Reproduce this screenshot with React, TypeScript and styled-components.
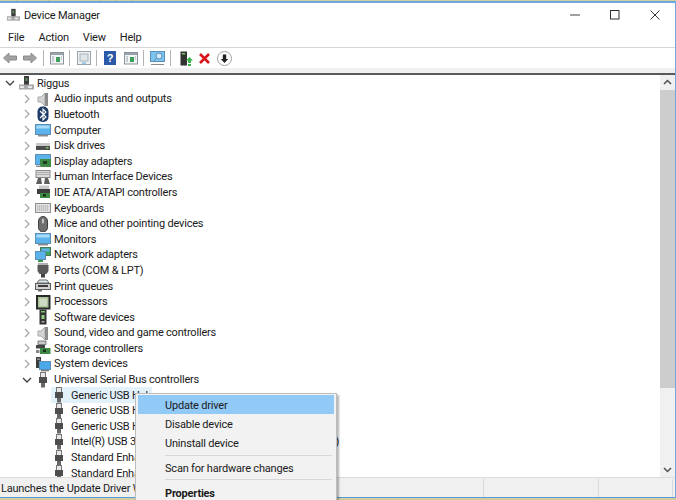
import React from "react";
import styled, { createGlobalStyle } from "styled-components";

const Global = createGlobalStyle`
  html, body { margin: 0; padding: 0; background: #fff; }
  #root { width: 676px; height: 500px; overflow: hidden; }
`;

const Page = styled.div`
  position: relative;
  width: 676px;
  height: 500px;
  overflow: hidden;
  display: flex;
  flex-direction: column;
  font-family: "Roboto", "Open Sans", sans-serif;
  font-size: 11px;
  letter-spacing: -0.2px;
  color: #1a1a1a;
  background: #d2cf9e;
`;
const TopStrip = styled.svg`
  display: block;
  width: 676px;
  height: 1px;
  flex: none;
`;
const Win = styled.div`
  flex: none;
  height: 497px;
  box-sizing: border-box;
  border-top: 2px solid #6ea8dc;
  border-right: 1px solid #6ea8dc;
  border-bottom: 1px solid #5a9bd5;
  background: #fff;
  display: flex;
  flex-direction: column;
`;
const TitleBar = styled.div`
  flex: none;
  height: 23px;
  display: flex;
  align-items: center;
  padding: 0 0 0 6px;
  gap: 4px;
`;
const TitleText = styled.span`
  flex: 1;
  padding-top: 1px;
`;
const WinControls = styled.div`
  display: flex;
  align-items: center;
  gap: 30px;
  padding-right: 15px;
`;
const MenuBar = styled.div`
  flex: none;
  display: flex;
  align-items: center;
  padding: 1px 0 0 8px;
  height: 20px;
  gap: 14px;
  border-bottom: 1px solid #d6d6d6;
`;
const MenuLabel = styled.span``;
const Toolbar = styled.div`
  flex: none;
  height: 20px;
  display: flex;
  align-items: center;
  padding-left: 3px;
`;
const ToolIcon = styled.span<{ $gap?: number }>`
  display: flex;
  margin-right: ${(p) => p.$gap ?? 5}px;
`;
const ToolSep = styled.span<{ $gap?: number }>`
  width: 1px;
  height: 16px;
  background: #b4b4b4;
  margin-right: ${(p) => p.$gap ?? 6}px;
`;
const ToolFoot = styled.div`
  flex: none;
  height: 7px;
  box-sizing: border-box;
  background: #f0f0f0;
  border-bottom: 2px solid #5a5a5a;
`;
const Content = styled.div`
  flex: none;
  height: 402px;
  display: flex;
`;
const Tree = styled.div`
  flex: 1;
  min-width: 0;
  overflow: hidden;
  padding-top: 0.5px;
`;
const Row = styled.div<{ $level: number }>`
  height: 15.6px;
  display: flex;
  align-items: center;
  white-space: nowrap;
  padding-left: ${(p) => [5, 22, 51][p.$level]}px;
`;
const Chevron = styled.span`
  width: 10px;
  margin-right: 3px;
  display: flex;
  justify-content: center;
`;
const RowIcon = styled.span<{ $deep?: boolean }>`
  display: flex;
  margin-right: ${(p) => (p.$deep ? 4 : 3)}px;
`;
const RowText = styled.span`
  display: flex;
  align-items: center;
  height: 15.6px;
`;
const SelectedWrap = styled.div`
  display: flex;
  align-items: center;
  width: 101px;
  height: 15.6px;
  background: #e3f1fb;
`;
const Scrollbar = styled.div`
  flex: none;
  width: 15px;
  background: #f0f0f0;
  display: flex;
  flex-direction: column;
  align-items: center;
`;
const ScrollBtn = styled.div`
  flex: none;
  height: 15px;
  display: flex;
  align-items: center;
  justify-content: center;
`;
const ScrollThumb = styled.div`
  flex: none;
  width: 15px;
  height: 298px;
  background: #cdcdcd;
`;
const ScrollGap = styled.div`
  flex: 1;
`;
const StatusBar = styled.div`
  flex: none;
  height: 20px;
  box-sizing: border-box;
  display: flex;
  background: #f0f0f0;
  border-top: 1px solid #dcdcdc;
  padding-top: 1px;
`;
const StatusCell = styled.div<{ $w: number }>`
  flex: none;
  width: ${(p) => p.$w}px;
  box-sizing: border-box;
  border-right: 1px solid #d9d9e0;
  display: flex;
  align-items: center;
  padding: 1px 0 0 1px;
  white-space: nowrap;
  overflow: hidden;
`;
const ContextMenu = styled.div`
  position: absolute;
  left: 135px;
  top: 393px;
  width: 202px;
  height: 112px;
  box-sizing: border-box;
  background: #f2f2f2;
  border: 1px solid #bdbdbd;
  padding: 1px 2px;
  box-shadow: 2px 2px 2px rgba(0, 0, 0, 0.3);
`;
const MenuEntry = styled.div<{ $active?: boolean; $bold?: boolean }>`
  height: 19px;
  box-sizing: border-box;
  padding: 1px 0 0 27px;
  display: flex;
  align-items: center;
  white-space: nowrap;
  background: ${(p) => (p.$active ? "#91c9f7" : "transparent")};
  font-weight: ${(p) => (p.$bold ? 700 : 400)};
`;
const MenuDivider = styled.div<{ $top: number; $bottom: number }>`
  height: 1px;
  background: #d7d7d7;
  margin: ${(p) => p.$top}px 2px ${(p) => p.$bottom}px 27px;
`;

const ChevronRight = () => (
  <svg width="8" height="10" viewBox="0 0 8 10"><path d="M2 1l4 4-4 4" fill="none" stroke="#a6a6a6" strokeWidth="1.2" /></svg>
);
const ChevronDown = () => (
  <svg width="10" height="8" viewBox="0 0 10 8"><path d="M1 2l4 4 4-4" fill="none" stroke="#404040" strokeWidth="1.3" /></svg>
);

type Kind = "pc" | "speaker" | "bt" | "monitor" | "disk" | "display" | "hid" | "ide" | "kbd" | "mouse" | "net" | "port" | "print" | "cpu" | "soft" | "storage" | "system" | "usb";

const glyphs: Record<Kind, React.ReactNode> = {
  pc: (
    <>
      <rect x="6" y="1" width="5" height="9" fill="#3d3d3d" />
      <rect x="7.5" y="3" width="2" height="3" fill="#5a8f5a" />
      <rect x="1" y="9.5" width="15" height="5" fill="#a8a8a8" />
      <rect x="2" y="11" width="4" height="2" fill="#e8e8e8" />
      <rect x="10" y="11" width="4" height="2" fill="#e8e8e8" />
    </>
  ),
  speaker: (
    <>
      <path d="M3 6h3l4-4v13l-4-4H3z" fill="#d4d4d4" stroke="#aaa" />
      <rect x="10" y="2" width="3" height="13" fill="#8c8c8c" />
    </>
  ),
  bt: (
    <>
      <rect x="2.5" y="0.5" width="11" height="15.5" rx="5" fill="#1c3b66" />
      <path d="M5 5l6 6-3 3V3l3 3-6 6" fill="none" stroke="#fff" strokeWidth="1.1" />
    </>
  ),
  monitor: (
    <>
      <rect x="0.5" y="2.5" width="15" height="10" fill="#5cb3ec" stroke="#5c8fb4" />
      <rect x="1.5" y="3.5" width="13" height="3" fill="#a8dcf8" />
      <rect x="3" y="13" width="10" height="1.5" fill="#8d8d8d" />
    </>
  ),
  disk: (
    <>
      <rect x="1" y="5" width="14" height="3" fill="#c9c9c9" />
      <rect x="1" y="8" width="14" height="4" fill="#4d4d4d" />
      <rect x="11" y="9" width="2.5" height="1.5" fill="#7bc66b" />
    </>
  ),
  display: (
    <>
      <rect x="0.5" y="1.5" width="15" height="10" fill="#5cb3ec" stroke="#5c8fb4" />
      <rect x="5" y="6" width="11" height="8" fill="#3e8a45" />
      <rect x="8" y="8" width="4" height="3" fill="#1f3d22" />
      <rect x="1" y="12.5" width="5" height="1.5" fill="#8d8d8d" />
    </>
  ),
  hid: (
    <>
      <rect x="1" y="1.5" width="14" height="7" fill="#dcdcdc" stroke="#888" />
      <path d="M2.5 3.5h11M2.5 5.5h11" stroke="#888" strokeDasharray="1.2 0.8" />
      <path d="M1 15l2-6h3l1 6zM9 15l1-6h3l2 6z" fill="#5f5f5f" />
    </>
  ),
  ide: (
    <>
      <rect x="4" y="1.5" width="10" height="4" fill="#c9c9c9" />
      <rect x="2" y="5" width="13" height="5" fill="#3d3d3d" />
      <rect x="5" y="9" width="10" height="5" fill="#3e8a45" />
      <rect x="8" y="10" width="3" height="2.5" fill="#16301a" />
    </>
  ),
  kbd: (
    <>
      <rect x="0.5" y="3.5" width="15" height="9" fill="#e4e4e4" stroke="#8d8d8d" />
      <path d="M2 6h12M2 8h12M2 10h12" stroke="#9c9c9c" strokeDasharray="1.3 0.7" />
    </>
  ),
  mouse: (
    <>
      <rect x="3.5" y="0.5" width="9" height="15.5" rx="4.5" fill="#6e6e6e" stroke="#3f3f3f" />
      <rect x="7" y="2.5" width="2" height="5" rx="1" fill="#c4c4c4" />
    </>
  ),
  net: (
    <>
      <rect x="5.5" y="0.5" width="10" height="8" fill="#3fa35a" stroke="#47785a" />
      <rect x="6.5" y="1.5" width="8" height="3" fill="#5cb3ec" />
      <rect x="0.5" y="4.5" width="10" height="8" fill="#5cb3ec" stroke="#5c8fb4" />
      <rect x="3" y="13" width="5" height="2" fill="#3c9b55" />
    </>
  ),
  port: (
    <>
      <rect x="3" y="1" width="10" height="2" fill="#b0b0b0" />
      <path d="M2.5 3h11v6l-2 3h-7l-2-3z" fill="#5a5a5a" />
      <rect x="6" y="12" width="4" height="3.5" fill="#444" />
    </>
  ),
  print: (
    <>
      <path d="M4 2h8l2 3H2z" fill="#dceaf3" stroke="#6a6a6a" />
      <rect x="0.5" y="5.5" width="15" height="6" fill="#d0d0d0" stroke="#5f5f5f" />
      <rect x="3" y="7" width="10" height="2" fill="#3c3c3c" />
      <rect x="3" y="11" width="4" height="2.5" fill="#6a6a6a" />
    </>
  ),
  cpu: (
    <>
      <rect x="1" y="1" width="14.5" height="14.5" fill="#2a2a2a" />
      <rect x="3" y="3" width="10.5" height="10.5" fill="#a9c296" />
      <rect x="4.5" y="4.5" width="7.5" height="7.5" fill="#cdd9c2" />
    </>
  ),
  soft: (
    <>
      <rect x="4.5" y="0.5" width="7" height="15" fill="#333" />
      <rect x="6" y="2" width="4" height="1.5" fill="#7bc66b" />
      <rect x="6.5" y="6" width="3" height="4" fill="#8fd07f" />
      <rect x="6.5" y="12" width="3" height="1.5" fill="#aaa" />
    </>
  ),
  storage: (
    <>
      <rect x="3" y="1" width="8" height="3.5" fill="#c9c9c9" stroke="#555" strokeWidth="0.7" />
      <rect x="1" y="5" width="9" height="3.5" fill="#454545" />
      <rect x="5" y="8" width="10.5" height="6" fill="#3e8a45" />
      <rect x="8" y="9.5" width="3" height="2.5" fill="#16301a" />
      <rect x="1" y="10" width="3.5" height="3" fill="#8a8a8a" />
    </>
  ),
  system: (
    <>
      <rect x="1" y="1" width="5" height="11" fill="#3d3d3d" />
      <rect x="2" y="2.5" width="3" height="1.2" fill="#aaa" />
      <rect x="4.5" y="5.5" width="11" height="8" fill="#4aa8e8" stroke="#5c8fb4" />
      <rect x="6" y="14" width="8" height="1.3" fill="#777" />
    </>
  ),
  usb: (
    <>
      <rect x="5.5" y="0.5" width="5" height="5" fill="#e6e6e6" stroke="#777" />
      <rect x="4" y="5" width="8" height="6" fill="#4e4e4e" />
      <rect x="6" y="11" width="4" height="4.5" fill="#666" />
    </>
  ),
};

const DevIcon = ({ kind, size = 16 }: { kind: Kind; size?: number }) => (
  <svg width={size} height={size} viewBox="0 0 16 16">{glyphs[kind]}</svg>
);

const categories: [string, Kind][] = [
  ["Audio inputs and outputs", "speaker"],
  ["Bluetooth", "bt"],
  ["Computer", "monitor"],
  ["Disk drives", "disk"],
  ["Display adapters", "display"],
  ["Human Interface Devices", "hid"],
  ["IDE ATA/ATAPI controllers", "ide"],
  ["Keyboards", "kbd"],
  ["Mice and other pointing devices", "mouse"],
  ["Monitors", "monitor"],
  ["Network adapters", "net"],
  ["Ports (COM & LPT)", "port"],
  ["Print queues", "print"],
  ["Processors", "cpu"],
  ["Software devices", "soft"],
  ["Sound, video and game controllers", "speaker"],
  ["Storage controllers", "storage"],
  ["System devices", "system"],
];

const usbChildren = [
  "Generic USB Hub",
  "Generic USB Hub",
  "Intel(R) USB 3.0 eXtensible Host Controller - 1 (Microsoft)",
  "Standard Enhanced PCI to USB Host Controller",
  "Standard Enhanced PCI to USB Host Controller",
];

const ArrowBtn = ({ dir }: { dir: "l" | "r" }) => (
  <svg width="14" height="12" viewBox="0 0 14 12">
    <path
      d={dir === "l" ? "M0.5 6L6 1v3h7.5v4H6v3z" : "M13.5 6L8 1v3H.5v4H8v3z"}
      fill="#a3a3a3"
      stroke="#8a8a8a"
    />
  </svg>
);
const PaneIcon = ({ accent }: { accent: string }) => (
  <svg width="14" height="14" viewBox="0 0 14 14">
    <rect x="0.5" y="1.5" width="13" height="11.5" fill="#f2f4f6" stroke="#8a939b" />
    <rect x="1" y="2" width="12" height="2" fill="#9aa4ad" />
    <rect x="6" y="6" width="4" height="5" fill={accent} />
    <path d="M2 6h2M2 8h2M2 10h2M11 6h1M11 8h1" stroke="#9aa4ad" />
  </svg>
);

export default function App() {
  return (
    <Page>
      <Global />
      <TopStrip viewBox="0 0 676 1">
        <path d="M16 0h2M48 0h2M98 0h2M115 0h2M130 0h2M165 0h1M180 0h1" stroke="#b9b0a0" />
      </TopStrip>
      <Win>
        <TitleBar>
          <DevIcon kind="pc" size={14} />
          <TitleText>Device Manager</TitleText>
          <WinControls>
            <svg width="10" height="10" viewBox="0 0 10 10"><path d="M0 5h10" stroke="#444" /></svg>
            <svg width="10" height="10" viewBox="0 0 10 10"><rect x=".5" y=".5" width="8.5" height="8.5" fill="none" stroke="#333" /></svg>
            <svg width="10" height="10" viewBox="0 0 10 10"><path d="M.5.5l9 9M9.5.5l-9 9" stroke="#333" /></svg>
          </WinControls>
        </TitleBar>
        <MenuBar>
          <MenuLabel>File</MenuLabel>
          <MenuLabel>Action</MenuLabel>
          <MenuLabel>View</MenuLabel>
          <MenuLabel>Help</MenuLabel>
        </MenuBar>
        <Toolbar>
          <ToolIcon $gap={6}><ArrowBtn dir="l" /></ToolIcon>
          <ToolIcon $gap={6}><ArrowBtn dir="r" /></ToolIcon>
          <ToolSep />
          <ToolIcon><PaneIcon accent="#3aa05a" /></ToolIcon>
          <ToolSep $gap={7} />
          <ToolIcon>
            <svg width="14" height="14" viewBox="0 0 14 14">
              <rect x="0.5" y="0.5" width="13" height="13" fill="#eef1f3" stroke="#9aa4ad" />
              <rect x="3" y="3" width="8" height="7" fill="#dfe6ea" stroke="#a8b2ba" />
              <path d="M5 12h4" stroke="#57a0d8" />
            </svg>
          </ToolIcon>
          <ToolSep $gap={7} />
          <ToolIcon $gap={8}>
            <svg width="12" height="14" viewBox="0 0 12 14">
              <rect width="12" height="14" fill="#2c59a8" />
              <text x="6" y="11" fontSize="11" fontWeight="700" fill="#fff" textAnchor="middle" fontFamily="Liberation Sans, sans-serif">?</text>
            </svg>
          </ToolIcon>
          <ToolIcon><PaneIcon accent="#3aa05a" /></ToolIcon>
          <ToolSep />
          <ToolIcon>
            <svg width="15" height="15" viewBox="0 0 15 15">
              <rect x="0.5" y="0.5" width="14" height="10" fill="#7cc4ef" stroke="#5c8fb4" />
              <circle cx="9" cy="5" r="3" fill="#cfeafa" stroke="#5c8fb4" />
              <path d="M6.5 7.5L3 11" stroke="#5c8fb4" />
              <path d="M1 13.5h13" stroke="#8a8a8a" />
            </svg>
          </ToolIcon>
          <ToolSep />
          <ToolIcon $gap={6}>
            <svg width="16" height="15" viewBox="-3 0 16 15">
              <rect x="0.5" y="0.5" width="6.5" height="14" fill="#333" />
              <rect x="2" y="2" width="3" height="1.5" fill="#7bc66b" />
              <path d="M9.5 6l3.5 3.5h-2V12H8V9.5H6z" fill="#39b54a" />
              <rect x="8" y="13" width="3" height="2" fill="#39b54a" />
            </svg>
          </ToolIcon>
          <ToolIcon $gap={7}>
            <svg width="11" height="11" viewBox="0 0 11 11"><path d="M1 1l9 9M10 1l-9 9" stroke="#d8141a" strokeWidth="2.6" /></svg>
          </ToolIcon>
          <ToolIcon>
            <svg width="15" height="15" viewBox="0 0 15 15">
              <circle cx="7.5" cy="7.5" r="7" fill="#fff" stroke="#a0a0a0" />
              <path d="M7.5 12L3.8 8h2V3.5h3.4V8h2z" fill="#222" />
            </svg>
          </ToolIcon>
        </Toolbar>
        <ToolFoot />
        <Content>
          <Tree>
            <Row $level={0}>
              <Chevron><ChevronDown /></Chevron>
              <RowIcon><DevIcon kind="pc" /></RowIcon>
              <RowText>Riggus</RowText>
            </Row>
            {categories.map(([label, kind]) => (
              <Row $level={1} key={label + kind}>
                <Chevron><ChevronRight /></Chevron>
                <RowIcon><DevIcon kind={kind} /></RowIcon>
                <RowText>{label}</RowText>
              </Row>
            ))}
            <Row $level={1}>
              <Chevron><ChevronDown /></Chevron>
              <RowIcon><DevIcon kind="usb" /></RowIcon>
              <RowText>Universal Serial Bus controllers</RowText>
            </Row>
            <Row $level={2}>
              <SelectedWrap>
                <RowIcon $deep><DevIcon kind="usb" /></RowIcon>
                <RowText>Generic USB Hub</RowText>
              </SelectedWrap>
            </Row>
            {usbChildren.map((label, i) => (
              <Row $level={2} key={i}>
                <RowIcon $deep><DevIcon kind="usb" /></RowIcon>
                <RowText>{label}</RowText>
              </Row>
            ))}
          </Tree>
          <Scrollbar>
            <ScrollBtn>
              <svg width="9" height="7" viewBox="0 0 9 7"><path d="M1 5l3.5-3.5L8 5" fill="none" stroke="#505050" strokeWidth="1.5" /></svg>
            </ScrollBtn>
            <ScrollThumb />
            <ScrollGap />
            <ScrollBtn>
              <svg width="9" height="7" viewBox="0 0 9 7"><path d="M1 2l3.5 3.5L8 2" fill="none" stroke="#505050" strokeWidth="1.5" /></svg>
            </ScrollBtn>
          </Scrollbar>
        </Content>
        <StatusBar>
          <StatusCell $w={484}>Launches the Update Driver Wizard for the selected device.</StatusCell>
          <StatusCell $w={115} />
          <StatusCell $w={74} />
        </StatusBar>
      </Win>
      <ContextMenu>
        <MenuEntry $active>Update driver</MenuEntry>
        <MenuEntry>Disable device</MenuEntry>
        <MenuEntry>Uninstall device</MenuEntry>
        <MenuDivider $top={3} $bottom={2} />
        <MenuEntry>Scan for hardware changes</MenuEntry>
        <MenuDivider $top={2} $bottom={3} />
        <MenuEntry $bold>Properties</MenuEntry>
      </ContextMenu>
    </Page>
  );
}
